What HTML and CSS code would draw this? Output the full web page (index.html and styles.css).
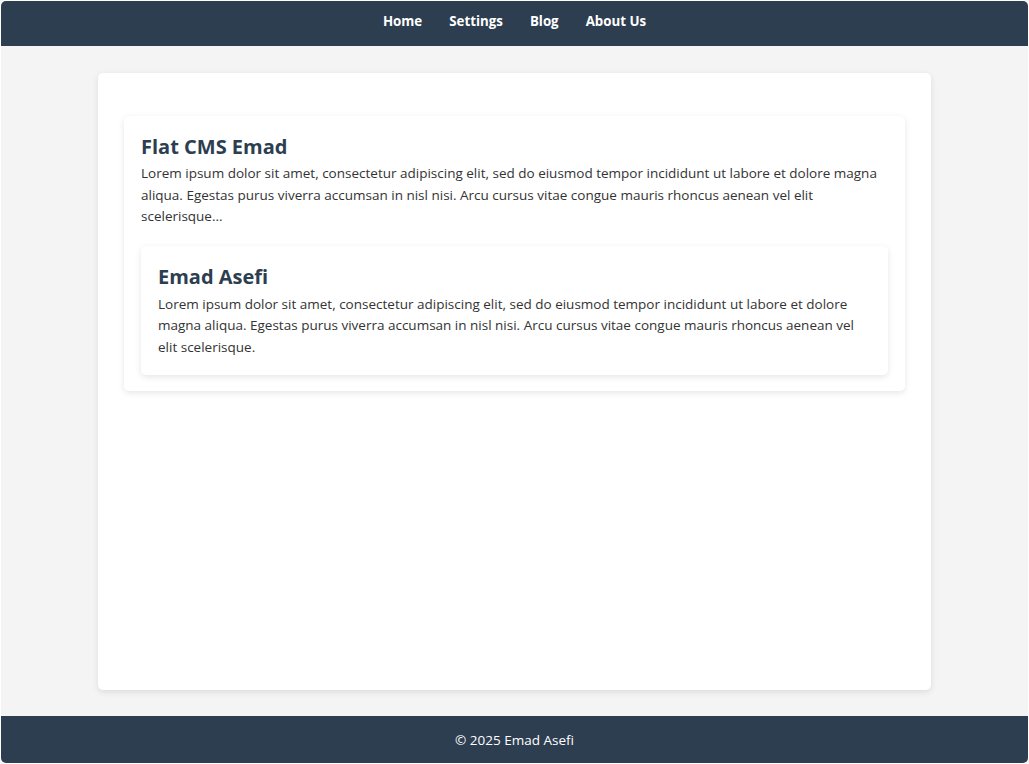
FILE: index.html
```html
<!DOCTYPE html>
<html lang="en">
<head>
    <meta charset="UTF-8">
    <meta name="viewport" content="width=device-width, initial-scale=1.0">
    <title>Flat CMS Emad</title>
    <link rel="stylesheet" href="styles.css">
</head>
<body>
    <header class="site-header">
        <nav class="main-nav">
            <a href="#">Home</a>
            <a href="#">Settings</a>
            <a href="#">Blog</a>
            <a href="#">About Us</a>
        </nav>
    </header>

    <main class="site-main">
        <div class="container">
            <article class="post">
                <h2>Flat CMS Emad</h2>
                <p>Lorem ipsum dolor sit amet, consectetur adipiscing elit, sed do eiusmod tempor incididunt ut labore et dolore magna aliqua. Egestas purus viverra accumsan in nisl nisi. Arcu cursus vitae congue mauris rhoncus aenean vel elit scelerisque...</p>

                <article class="post">
                    <h2>Emad Asefi</h2>
                    <p>Lorem ipsum dolor sit amet, consectetur adipiscing elit, sed do eiusmod tempor incididunt ut labore et dolore magna aliqua. Egestas purus viverra accumsan in nisl nisi. Arcu cursus vitae congue mauris rhoncus aenean vel elit scelerisque.</p>
                </article>
            </article>
        </div>
    </main>

    <footer class="site-footer">
        <p>&copy; 2025 Emad Asefi</p>
    </footer>
</body>
</html>
```

FILE: styles.css
```css
* {
    box-sizing: border-box;
}

body {
    font-family: 'Open Sans', 'Liberation Sans', sans-serif;
    background: #f4f4f4;
    color: #333;
    margin: 0;
    min-height: 100vh;
    display: flex;
    flex-direction: column;
    border: 1px solid #fff;
    border-radius: 6px;
    overflow: hidden;
}

.site-header {
    background: #2c3e50;
    height: 45px;
    padding-top: 11px;
}

.main-nav {
    display: flex;
    justify-content: center;
    gap: 27px;
}

.main-nav a {
    color: #fff;
    text-decoration: none;
    font-weight: bold;
    font-size: 13.3px;
    line-height: 18px;
}

.site-main {
    flex: 1;
    display: flex;
    padding: 27px 0 26px;
}

.container {
    width: 833px;
    margin: 0 auto;
    background: #fff;
    border-radius: 5px;
    box-shadow: 0 2px 6px rgba(0,0,0,0.1);
    padding: 43px 26px;
}

.post {
    background: #fff;
    border-radius: 5px;
    box-shadow: 0 2px 6px rgba(0,0,0,0.1);
    padding: 17px 17px 16px;
}

.post .post {
    margin-top: 18px;
    padding-bottom: 17px;
}

.post h2 {
    color: #2c3e50;
    font-size: 20px;
    line-height: 28px;
    margin: 0 0 2px;
}

.post .post h2 {
    margin-bottom: 3px;
}

.post p {
    font-size: 13.5px;
    line-height: 21.5px;
    margin: 0;
}

.site-footer {
    background: #2c3e50;
    color: #fff;
    height: 47px;
    display: flex;
    align-items: center;
    justify-content: center;
    font-size: 13.5px;
}

.site-footer p {
    margin: 0;
}
```
